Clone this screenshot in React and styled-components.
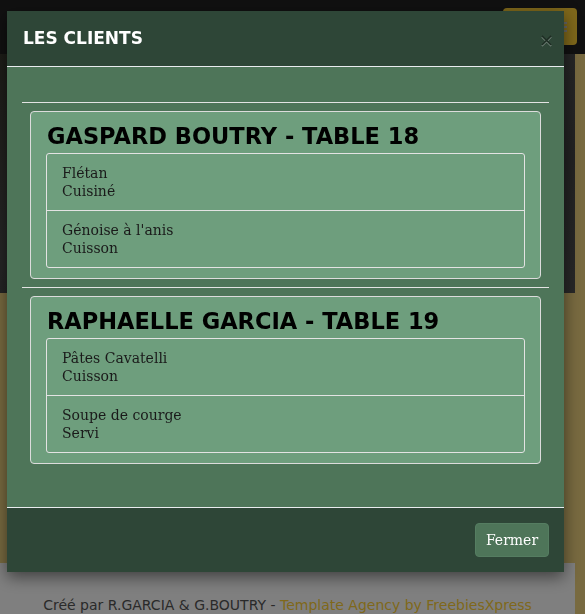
import React from 'react';
import styled, {createGlobalStyle} from 'styled-components';

const GlobalStyle = createGlobalStyle`
  html, body {
    margin: 0;
    padding: 0;
  }
  body {
    background: #f0d480;
    font-family: "DejaVu Serif", serif;
    overflow: hidden;
  }
`;

const clients = [
  {
    name: 'GASPARD BOUTRY',
    table: 18,
    plats: [
      {nom: 'Flétan', etat: 'Cuisiné'},
      {nom: 'Génoise à l\'anis', etat: 'Cuisson'},
    ],
  },
  {
    name: 'RAPHAELLE GARCIA',
    table: 19,
    plats: [
      {nom: 'Pâtes Cavatelli', etat: 'Cuisson'},
      {nom: 'Soupe de courge', etat: 'Servi'},
    ],
  },
];

function App() {
  return (
    <>
      <GlobalStyle />
      <Page>
        <Navbar>
          <MenuButton aria-label="Menu">
            <MenuBars>
              <span /><span /><span />
            </MenuBars>
          </MenuButton>
        </Navbar>
        <Hero />
        <Section />
        <Footer>
          Créé par R.GARCIA &amp; G.BOUTRY - <FooterLink>Template Agency by FreebiesXpress</FooterLink>
        </Footer>
      </Page>

      <Backdrop />
      <ModalWrap>
        <Dialog>
          <ModalHeader>
            <ModalTitle>LES CLIENTS</ModalTitle>
            <CloseButton>×</CloseButton>
          </ModalHeader>
          <ModalBody>
            {clients.map((client) => (
              <React.Fragment key={client.table}>
                <Rule />
                <Card>
                  <CardTitle>{client.name} - TABLE {client.table}</CardTitle>
                  <ListGroup>
                    {client.plats.map((plat) => (
                      <ListItem key={plat.nom}>
                        {plat.nom}
                        <br />
                        {plat.etat}
                      </ListItem>
                    ))}
                  </ListGroup>
                </Card>
              </React.Fragment>
            ))}
          </ModalBody>
          <ModalFooter>
            <FooterButton>Fermer</FooterButton>
          </ModalFooter>
        </Dialog>
      </ModalWrap>
    </>
  );
}

const Page = styled.div`
  padding-right: 10px;
  height: 614px;
  overflow: hidden;
`;

const Navbar = styled.nav`
  position: fixed;
  top: 0;
  left: 0;
  right: 0;
  height: 54px;
  background: #222;
  display: flex;
  justify-content: flex-end;
  align-items: flex-start;
  padding: 8px 8px 0 0;
  box-sizing: border-box;
`;

const MenuButton = styled.button`
  width: 74px;
  height: 37px;
  border: none;
  border-radius: 4px;
  background: #fed136;
  display: flex;
  align-items: flex-start;
  justify-content: flex-end;
  padding: 14px 10px 0;
`;

const MenuBars = styled.span`
  display: flex;
  flex-direction: column;
  gap: 2px;
  > span {
    display: block;
    width: 10px;
    height: 2px;
    background: #ccc;
  }
`;

const Hero = styled.header`
  margin-top: 54px;
  height: 239px;
  background: linear-gradient(160deg, #3a3a30 0%, #4c4c4c 45%, #444 70%, #505050 100%);
`;

const Section = styled.section`
  height: 270px;
`;

const Footer = styled.footer`
  background: #fff;
  height: 51px;
  padding-top: 34px;
  box-sizing: border-box;
  text-align: center;
  font-family: "DejaVu Sans", sans-serif;
  font-size: 14px;
  color: #555;
  white-space: nowrap;
`;

const FooterLink = styled.span`
  color: #fed136;
`;

const Backdrop = styled.div`
  position: fixed;
  inset: 0;
  background: rgba(0, 0, 0, 0.5);
`;

const ModalWrap = styled.div`
  position: fixed;
  inset: 0;
  padding: 11px 21px 0 7px;
`;

const Dialog = styled.div`
  background: #4e7559;
  box-shadow: 0 5px 15px rgba(0, 0, 0, 0.5);
  display: flex;
  flex-direction: column;
`;

const ModalHeader = styled.div`
  background: #2e4637;
  height: 55px;
  border-bottom: 1px solid #e9ecef;
  display: flex;
  align-items: center;
  justify-content: space-between;
  padding: 0 16px 0 16px;
`;

const ModalTitle = styled.h5`
  margin: 0;
  color: #fff;
  font-family: "DejaVu Sans", sans-serif;
  font-weight: bold;
  font-size: 17px;
  line-height: 1.2;
`;

const CloseButton = styled.span`
  color: #000;
  opacity: 0.35;
  text-shadow: 0 1px 0 #fff;
  font-family: "DejaVu Sans", sans-serif;
  font-size: 18px;
  line-height: 1;
  margin: 2px -6px 0 0;
`;

const ModalBody = styled.div`
  padding: 35px 15px 35px;
`;

const Rule = styled.hr`
  margin: 0;
  border: none;
  border-top: 1px solid #e3e3e3;
`;

const Card = styled.div`
  margin: 8px 8px;
  background: #6e9e7d;
  border: 1px solid #dcdcdc;
  border-radius: 4px;
  padding: 10px 15px;
`;

const CardTitle = styled.h3`
  margin: 0 0 3px;
  font-family: "DejaVu Sans", sans-serif;
  font-weight: bold;
  font-size: 22.5px;
  line-height: 28px;
  color: #000;
  padding-left: 1px;
`;

const ListGroup = styled.ul`
  list-style: none;
  margin: 0;
  padding: 0;
  border: 1px solid #e3e3e3;
  border-radius: 3px;
`;

const ListItem = styled.li`
  padding: 10px 15px;
  font-size: 14px;
  line-height: 18px;
  color: #1a1a1a;
  & + & {
    border-top: 1px solid #e3e3e3;
  }
`;

const ModalFooter = styled.div`
  background: #2e4637;
  border-top: 1px solid #e9ecef;
  display: flex;
  justify-content: flex-end;
  padding: 15px 15px 15px;
`;

const FooterButton = styled.button`
  width: 74px;
  height: 34px;
  background: #4e7559;
  border: 1px solid #557d61;
  border-radius: 4px;
  color: #fff;
  font-family: "DejaVu Serif", serif;
  font-size: 14px;
  padding: 0;
`;

export default App;
